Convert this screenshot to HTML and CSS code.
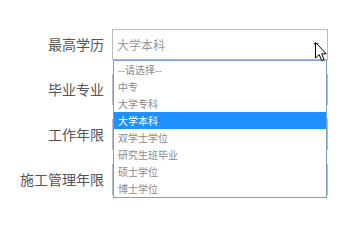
FILE: index.html
```html
<!DOCTYPE html>
<html lang="zh">
<head>
<meta charset="utf-8">
<link rel="stylesheet" href="styles.css">
</head>
<body>
<form class="form">
  <div class="row">
    <label class="label">最高学历</label>
    <div class="select"><span class="value">大学本科</span><span class="arrow"></span></div>
  </div>
  <div class="row">
    <label class="label">毕业专业</label>
    <div class="select"></div>
  </div>
  <div class="row">
    <label class="label">工作年限</label>
    <div class="select"></div>
  </div>
  <div class="row">
    <label class="label">施工管理年限</label>
    <div class="select"></div>
  </div>
</form>
<ul class="dropdown">
  <li>--请选择--</li>
  <li>中专</li>
  <li>大学专科</li>
  <li class="active">大学本科</li>
  <li>双学士学位</li>
  <li>研究生班毕业</li>
  <li>硕士学位</li>
  <li>博士学位</li>
</ul>
<svg class="cursor" width="13" height="20" viewBox="0 0 13 20">
  <path d="M0.5 0.5 L0.5 16 L4.2 12.6 L6.7 18.6 L9 17.6 L6.6 11.8 L11.3 11.8 Z" fill="#fff" stroke="#000" stroke-width="1" stroke-linejoin="miter"/>
</svg>
</body>
</html>
```
FILE: styles.css
```css
html, body {
  margin: 0;
  padding: 0;
  background: #fff;
}
body {
  width: 348px;
  height: 205px;
  overflow: hidden;
  position: relative;
  font-family: "Noto Sans CJK SC", "Noto Sans", sans-serif;
}
.form {
  display: flex;
  flex-direction: column;
  gap: 14px;
  padding-top: 29px;
}
.row {
  display: flex;
  align-items: center;
  gap: 8px;
  height: 31px;
}
.label {
  width: 104px;
  text-align: right;
  font-size: 14px;
  color: #555;
  line-height: 31px;
}
.select {
  box-sizing: border-box;
  width: 216px;
  height: 31px;
  border: 1px solid #b4bcc6;
  display: flex;
  align-items: center;
  padding-left: 4px;
  position: relative;
}
.value {
  font-size: 12px;
  color: #999;
}
.arrow {
  position: absolute;
  right: 8px;
  top: 13px;
  width: 0;
  height: 0;
  border-left: 3px solid transparent;
  border-right: 3px solid transparent;
  border-top: 4px solid #777;
}
.dropdown {
  position: absolute;
  left: 113px;
  top: 60px;
  box-sizing: border-box;
  width: 214px;
  height: 138px;
  margin: 0;
  padding: 0;
  list-style: none;
  background: #fff;
  border: 1px solid #7f9bc9;
}
.dropdown li {
  height: 17px;
  line-height: 17px;
  font-size: 10px;
  color: #8a8a8a;
  padding-left: 4px;
}
.dropdown li.active {
  background: #1e90ff;
  color: #fff;
}
.cursor {
  position: absolute;
  left: 315px;
  top: 42px;
}
```
